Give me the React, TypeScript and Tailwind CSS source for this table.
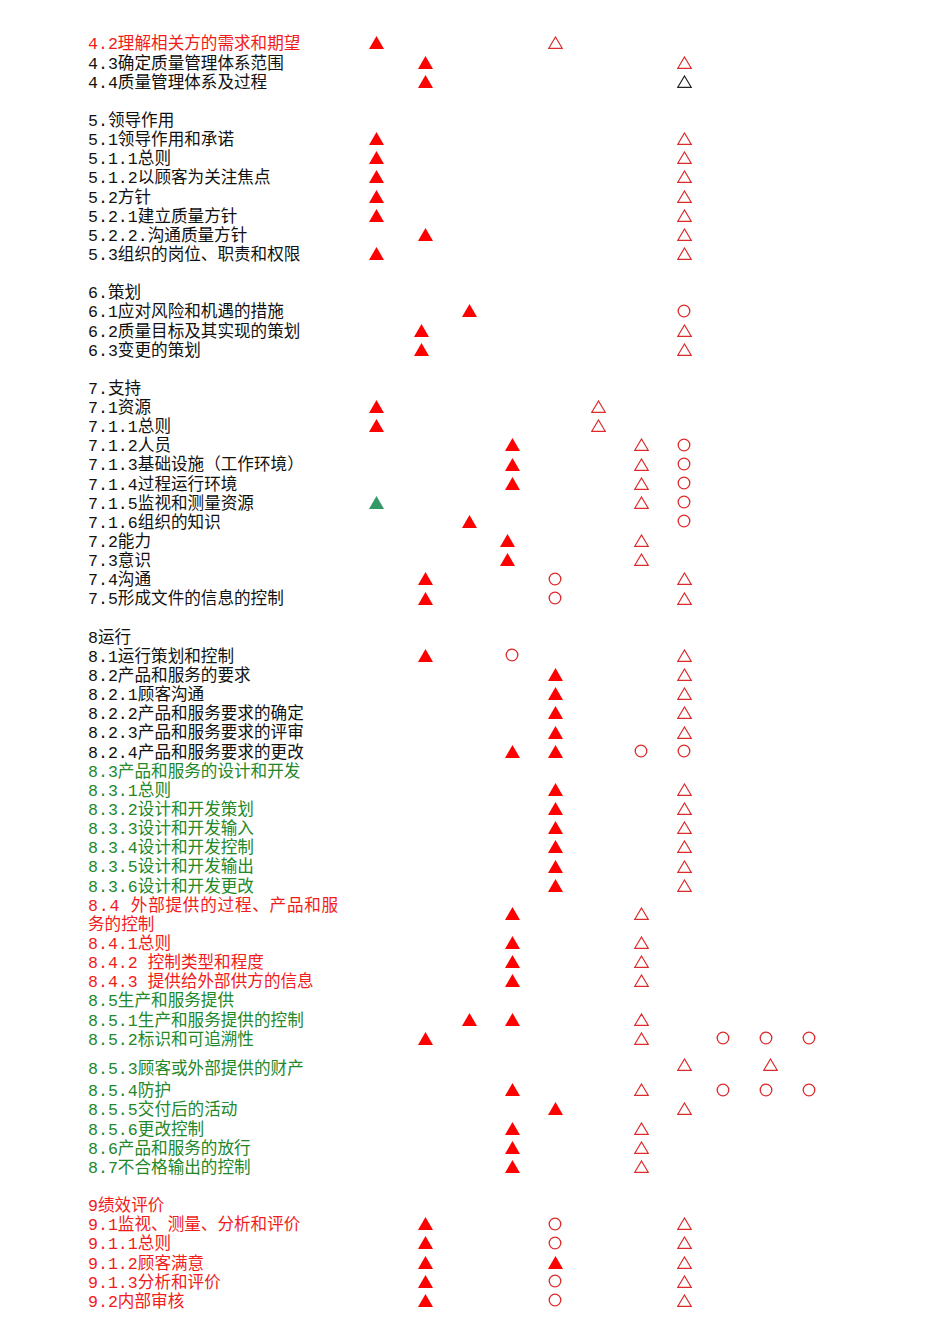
type Kind = "F" | "G" | "T" | "K" | "O"
type Sym = [number, Kind, string?]

type Row = {
  t?: string | string[]
  c?: "k" | "r" | "g"
  h?: "double" | "tall"
  s?: Sym[]
}

const textColor = {
  k: "text-[#111111]",
  r: "text-[#f01c1c]",
  g: "text-[#22882a]",
}

// symbol set used all over the sheet
const A = (col: number, shift?: string): Sym => [col, "F", shift]
const T = (col: number, shift?: string): Sym => [col, "T", shift]
const O = (col: number): Sym => [col, "O"]

const rows: Row[] = [
  { t: "4.2理解相关方的需求和期望", c: "r", s: [A(1), T(5)] },
  { t: "4.3确定质量管理体系范围", s: [A(2), T(8)] },
  { t: "4.4质量管理体系及过程", s: [A(2), [8, "K"]] },
  {},
  { t: "5.领导作用" },
  { t: "5.1领导作用和承诺", s: [A(1), T(8)] },
  { t: "5.1.1总则", s: [A(1), T(8)] },
  { t: "5.1.2以顾客为关注焦点", s: [A(1), T(8)] },
  { t: "5.2方针", s: [A(1), T(8)] },
  { t: "5.2.1建立质量方针", s: [A(1), T(8)] },
  { t: "5.2.2.沟通质量方针", s: [A(2), T(8)] },
  { t: "5.3组织的岗位、职责和权限", s: [A(1), T(8)] },
  {},
  { t: "6.策划" },
  { t: "6.1应对风险和机遇的措施", s: [A(3), O(8)] },
  { t: "6.2质量目标及其实现的策划", s: [A(2, "mr-[9px]"), T(8)] },
  { t: "6.3变更的策划", s: [A(2, "mr-[9px]"), T(8)] },
  {},
  { t: "7.支持" },
  { t: "7.1资源", s: [A(1), T(6)] },
  { t: "7.1.1总则", s: [A(1), T(6)] },
  { t: "7.1.2人员", s: [A(4), T(7), O(8)] },
  { t: "7.1.3基础设施（工作环境）", s: [A(4), T(7), O(8)] },
  { t: "7.1.4过程运行环境", s: [A(4), T(7), O(8)] },
  { t: "7.1.5监视和测量资源", s: [[1, "G"], T(7), O(8)] },
  { t: "7.1.6组织的知识", s: [A(3), O(8)] },
  { t: "7.2能力", s: [A(4, "mr-[9px]"), T(7)] },
  { t: "7.3意识", s: [A(4, "mr-[9px]"), T(7)] },
  { t: "7.4沟通", s: [A(2), O(5), T(8)] },
  { t: "7.5形成文件的信息的控制", s: [A(2), O(5), T(8)] },
  {},
  { t: "8运行" },
  { t: "8.1运行策划和控制", s: [A(2), O(4), T(8)] },
  { t: "8.2产品和服务的要求", s: [A(5), T(8)] },
  { t: "8.2.1顾客沟通", s: [A(5), T(8)] },
  { t: "8.2.2产品和服务要求的确定", s: [A(5), T(8)] },
  { t: "8.2.3产品和服务要求的评审", s: [A(5), T(8)] },
  { t: "8.2.4产品和服务要求的更改", s: [A(4), A(5), O(7), O(8)] },
  { t: "8.3产品和服务的设计和开发", c: "g" },
  { t: "8.3.1总则", c: "g", s: [A(5), T(8)] },
  { t: "8.3.2设计和开发策划", c: "g", s: [A(5), T(8)] },
  { t: "8.3.3设计和开发输入", c: "g", s: [A(5), T(8)] },
  { t: "8.3.4设计和开发控制", c: "g", s: [A(5), T(8)] },
  { t: "8.3.5设计和开发输出", c: "g", s: [A(5), T(8)] },
  { t: "8.3.6设计和开发更改", c: "g", s: [A(5), T(8)] },
  { t: ["8.4 外部提供的过程、产品和服", "务的控制"], c: "r", h: "double", s: [A(4), T(7)] },
  { t: "8.4.1总则", c: "r", s: [A(4), T(7)] },
  { t: "8.4.2 控制类型和程度", c: "r", s: [A(4), T(7)] },
  { t: "8.4.3 提供给外部供方的信息", c: "r", s: [A(4), T(7)] },
  { t: "8.5生产和服务提供", c: "g" },
  { t: "8.5.1生产和服务提供的控制", c: "g", s: [A(3), A(4), T(7)] },
  { t: "8.5.2标识和可追溯性", c: "g", s: [A(2), T(7), O(9), O(10), O(11)] },
  { t: "8.5.3顾客或外部提供的财产", c: "g", h: "tall", s: [T(8), T(10, "ml-[9px]")] },
  { t: "8.5.4防护", c: "g", s: [A(4), T(7), O(9), O(10), O(11)] },
  { t: "8.5.5交付后的活动", c: "g", s: [A(5), T(8)] },
  { t: "8.5.6更改控制", c: "g", s: [A(4), T(7)] },
  { t: "8.6产品和服务的放行", c: "g", s: [A(4), T(7)] },
  { t: "8.7不合格输出的控制", c: "g", s: [A(4), T(7)] },
  {},
  { t: "9绩效评价", c: "r" },
  { t: "9.1监视、测量、分析和评价", c: "r", s: [A(2), O(5), T(8)] },
  { t: "9.1.1总则", c: "r", s: [A(2), O(5), T(8)] },
  { t: "9.1.2顾客满意", c: "r", s: [A(2), A(5), T(8)] },
  { t: "9.1.3分析和评价", c: "r", s: [A(2), O(5), T(8)] },
  { t: "9.2内部审核", c: "r", s: [A(2), O(5), T(8)] },
]

function Mark({ kind, className }: { kind: Kind; className?: string }) {
  if (kind === "F" || kind === "G") {
    return (
      <svg width="15" height="13" viewBox="0 0 15 13" className={className}>
        <polygon points="7.5,0 15,13 0,13" fill={kind === "F" ? "#ff0000" : "#339966"} />
      </svg>
    )
  }
  if (kind === "O") {
    return (
      <svg width="14" height="14" viewBox="0 0 14 14" className={className}>
        <circle cx="7" cy="7" r="5.8" fill="none" stroke="#dd2a2a" strokeWidth="1.3" />
      </svg>
    )
  }
  return (
    <svg width="15" height="13" viewBox="0 0 15 13" className={className}>
      <polygon
        points="7.5,1 14.2,12.3 0.8,12.3"
        fill="none"
        stroke={kind === "K" ? "#222222" : "#dd2a2a"}
        strokeWidth="1.2"
      />
    </svg>
  )
}

function SheetRow({ row }: { row: Row }) {
  const height =
    row.h === "double" ? "h-[38.3px]" : row.h === "tall" ? "h-[32.4px]" : "h-[19.15px]"
  // the sheet prints its text a touch low in the cell
  const nudge = row.h === "tall" ? "translate-y-[6px]" : "translate-y-[2px]"
  const cells = Array.from({ length: 11 }, (_, i) => row.s?.find((s) => s[0] === i + 1))

  return (
    <div
      className={`grid grid-cols-[264px_48px_51px_36px_50px_36px_50px_36px_50px_28px_58px_28px] items-center ${height}`}
    >
      <div className={`whitespace-nowrap leading-[19.15px] ${nudge} ${textColor[row.c ?? "k"]}`}>
        {Array.isArray(row.t) ? (
          <>
            <span className="tracking-[0.75px]">{row.t[0]}</span>
            <br />
            {row.t[1]}
          </>
        ) : (
          row.t
        )}
      </div>
      {cells.map((s, i) => (
        <div key={i} className="flex items-center justify-center">
          {s && <Mark kind={s[1]} className={s[2]} />}
        </div>
      ))}
    </div>
  )
}

export default function App() {
  return (
    <div className="min-h-[1344px] w-[950px] bg-white pt-[33.4px] pl-[88px] font-['Liberation_Mono','Noto_Sans_CJK_SC',monospace] text-[16.6px]">
      {rows.map((row, i) => (
        <SheetRow key={i} row={row} />
      ))}
    </div>
  )
}
